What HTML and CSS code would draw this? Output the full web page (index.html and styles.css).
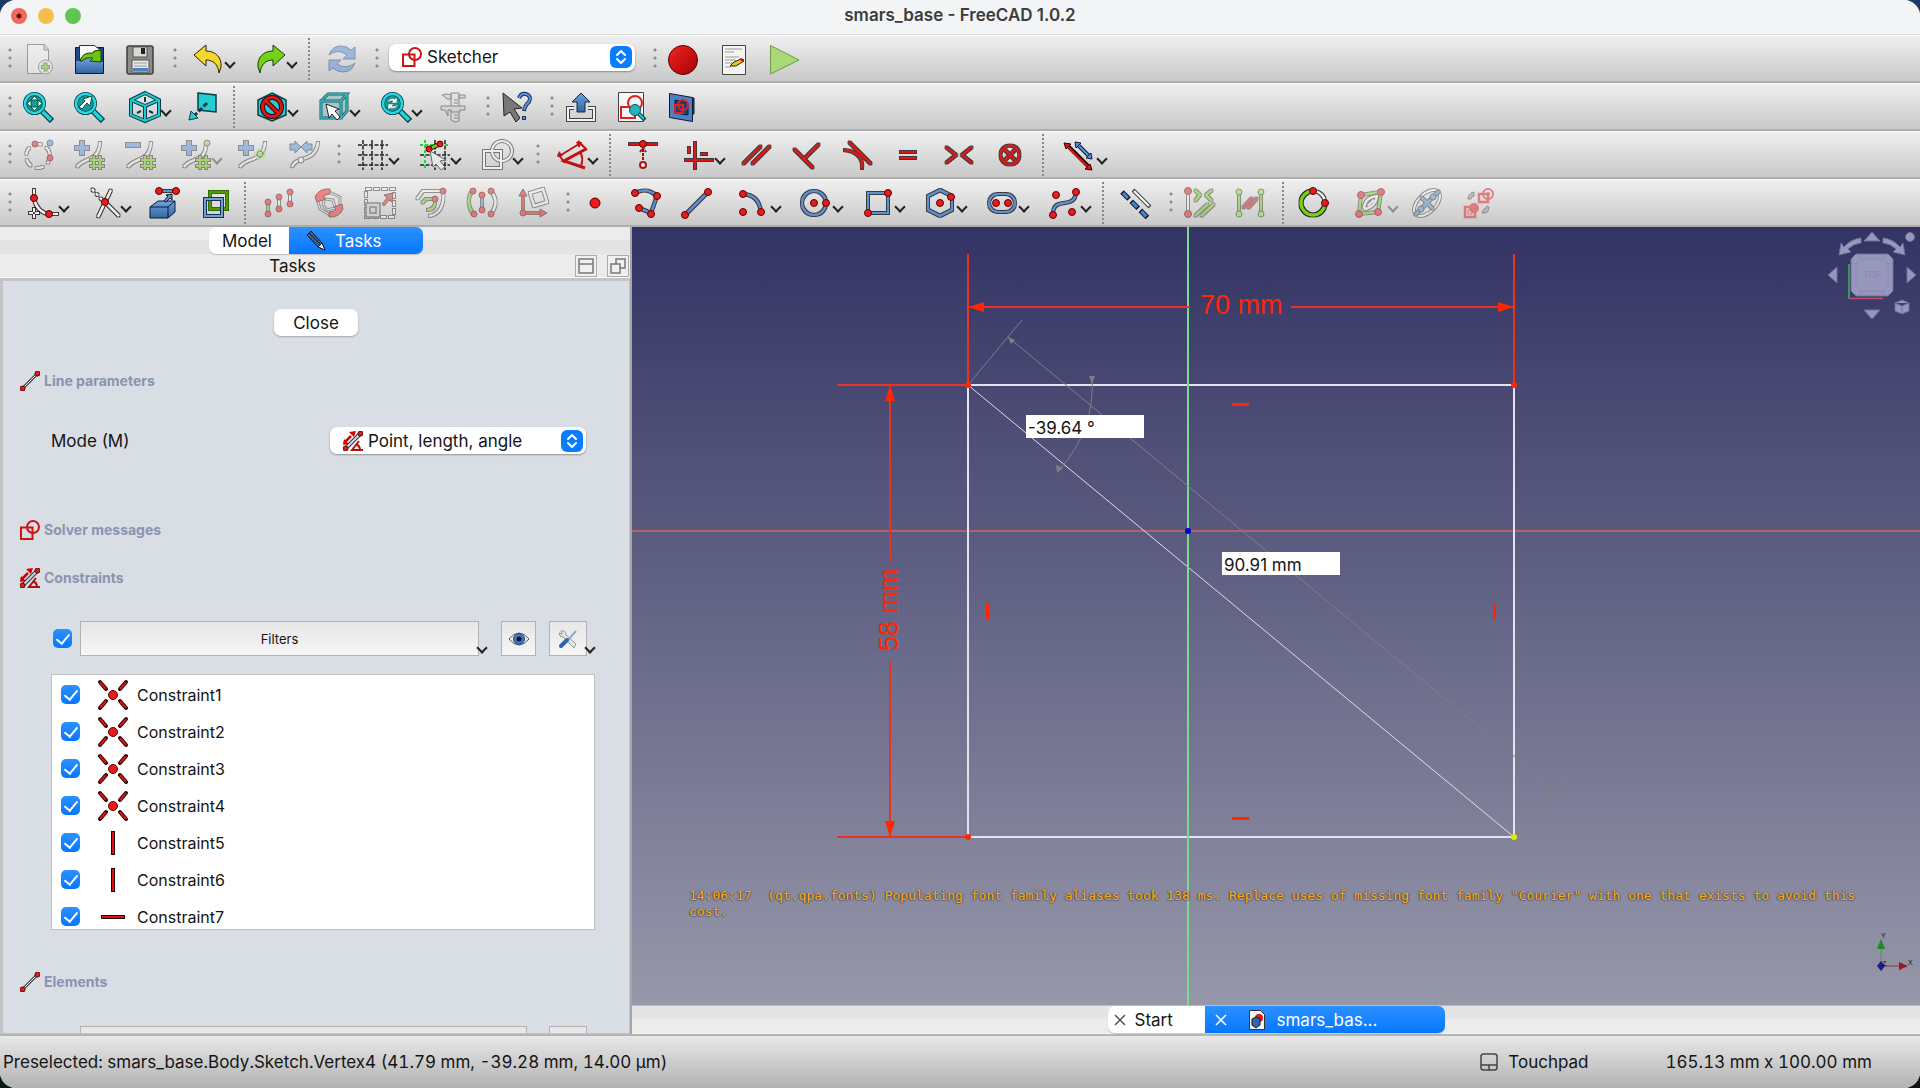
FILE: index.html
```html
<!DOCTYPE html>
<html lang="en">
<head>
<meta charset="utf-8">
<title>smars_base - FreeCAD 1.0.2</title>
<link rel="stylesheet" href="styles.css">
</head>
<body>
<svg class="defs" aria-hidden="true">
  <defs>
    <filter id="ol" x="-4" y="-4" width="40" height="40" filterUnits="userSpaceOnUse">
      <feMorphology in="SourceAlpha" operator="dilate" radius="0.8" result="fat"/>
      <feFlood flood-color="#1c1414" flood-opacity="0.8"/>
      <feComposite in2="fat" operator="in" result="edge"/>
      <feMerge><feMergeNode in="edge"/><feMergeNode in="SourceGraphic"/></feMerge>
    </filter>
    <linearGradient id="redg" x1="0" y1="0" x2="1" y2="1"><stop offset="0" stop-color="#f02525"/><stop offset="1" stop-color="#a80000"/></linearGradient>
    <linearGradient id="blueg" x1="0" y1="0" x2="0" y2="1"><stop offset="0" stop-color="#6fa2dc"/><stop offset="1" stop-color="#3465a4"/></linearGradient>
    <symbol id="sketch" viewBox="0 0 20 20"><path d="M1 7.500h11.500v11.500h-11.500z" class="s2"/><circle cx="13" cy="7" r="6" class="s2"/></symbol>
    <symbol id="line" viewBox="0 0 20 20"><path d="M3 17L17 3" stroke="#444" stroke-width="3"/><path d="M3 17L17 3" stroke="#eee" stroke-width="1"/><circle cx="2.500" cy="17.500" r="2.500" class="dot"/><circle cx="17.500" cy="2.500" r="2.500" class="dot"/></symbol>
    <symbol id="constr" viewBox="0 0 20 20"><path d="M3 17L17 3" stroke="#333" stroke-width="4"/><path d="M3 17L17 3" stroke="#cfd8e6" stroke-width="2"/><path d="M1 12L8 5" stroke="#d40000" stroke-width="2.500"/><path d="M0 14l1-6 5 5zM13 0l-7 1 5 5z" fill="#d40000"/><path d="M16 10L9 19h11M13 13q4 2 4 6" stroke="#b01010" stroke-width="2" fill="none"/><circle cx="2.500" cy="17.500" r="2.500" class="dot"/><circle cx="17.500" cy="2.500" r="2.500" class="dot"/></symbol>
    <symbol id="step" viewBox="0 0 22 22"><rect width="22" height="22" rx="6" fill="#0a7cff"/><path d="M7 9l4-4 4 4M7 13l4 4 4-4" fill="none" stroke="#fff" stroke-width="2" stroke-linecap="round" stroke-linejoin="round"/></symbol>
    <symbol id="coin" viewBox="0 0 32 32"><path d="M3 3L9 10M29 3L23 10M3 29L9 22M29 29L23 22" stroke="#250000" stroke-width="4" stroke-linecap="round"/><path d="M3 3L9 10M29 3L23 10M3 29L9 22M29 29L23 22" stroke="#e01010" stroke-width="2"/><circle cx="16" cy="16" r="4.500" class="dot"/></symbol>
    <symbol id="vert" viewBox="0 0 32 32"><rect x="14.500" y="4.500" width="3" height="23" fill="#e01010" stroke="#250000"/></symbol>
    <symbol id="horz" viewBox="0 0 32 32"><rect x="4.500" y="14.500" width="23" height="3" fill="#e01010" stroke="#250000"/></symbol>
    <symbol id="mag" viewBox="0 0 32 32"><path d="M18 18L30 30" stroke="#073f44" stroke-width="6"/><path d="M19 19L29 29" stroke="#22d5dc" stroke-width="3.500"/><circle cx="12.500" cy="12.500" r="9.500" fill="#159aa2" stroke="#073f44" stroke-width="4"/><circle cx="12.500" cy="12.500" r="9.500" fill="none" stroke="#22dbe2" stroke-width="2.500"/></symbol>
  </defs>
</svg>
<div class="window">
  <header class="titlebar">
    <div class="lights"><button class="light red" aria-label="Close window"></button><button class="light amber" aria-label="Minimize"></button><button class="light green" aria-label="Zoom"></button></div>
    <h1>smars_base - FreeCAD 1.0.2</h1>
  </header>

  <div class="toolbar" role="toolbar" aria-label="File">
    <span class="grip first"></span>
    <button class="tb off" aria-label="New"><svg viewBox="0 0 32 32"><path d="M5.500 1.500h17l4 5v24h-21z" fill="#f4f4f4" stroke="#555"/><path d="M22 2v5h4" fill="#ccc" stroke="#555"/><circle cx="23.500" cy="24" r="7" fill="#eee" stroke="#666"/><path d="M23.500 19.500v9M19 24h9" stroke="#3c7a10" stroke-width="4"/><path d="M23.500 20.500v7M20 24h7" stroke="#7ad53a" stroke-width="2"/></svg></button>
    <button class="tb" aria-label="Open"><svg viewBox="0 0 32 32"><path d="M2.500 4.500h28v26h-28z" fill="#204a87" stroke="#0b1a33"/><path d="M6.500 2.500h15l5 4v13h-20z" fill="#fafafa" stroke="#333"/><path d="M3 18h5l3-3h7l3 4h9v11H3z" fill="url(#blueg)"/><path d="M7 18Q9 9 20 10l1-2 7-1v12l-11-1 3-3q-7-1-11 3z" fill="#6cc40c" stroke="#173d00"/></svg></button>
    <button class="tb" aria-label="Save"><svg viewBox="0 0 32 32"><rect x="3" y="3" width="26" height="28" rx="2" fill="#8b8d88" stroke="#3d3f3c" stroke-width="1.500"/><rect x="9" y="4" width="14" height="10" fill="#d8d8d6" stroke="#555"/><rect x="17" y="5" width="4" height="6" fill="#222"/><rect x="8" y="17" width="17" height="12" fill="#e8e8e8" stroke="#555"/><path d="M10 20h13M10 23h13" stroke="#999"/><path d="M9 26.500h15" stroke="#4a7fcc" stroke-width="3"/></svg></button>
    <span class="grip"></span>
    <button class="tb menu" aria-label="Undo"><svg viewBox="0 0 32 32"><path d="M1 12L13 2V8C23 8 29 15 28 24L26 30C25 21 20 17 13 17V23Z" fill="#f2d72c" stroke="#2b2300"/></svg></button>
    <button class="tb menu" aria-label="Redo"><svg viewBox="0 0 32 32"><path d="M30 12L18 2V8C8 8 2 15 3 24L5 30C6 21 11 17 18 17V23Z" fill="#73d216" stroke="#173d00"/></svg></button>
    <span class="sep"></span>
    <button class="tb off" aria-label="Refresh"><svg viewBox="0 0 32 32"><path d="M3 12Q6 3 15 3q6 0 10 4l4-3v12H17l4-4q-9-7-18 0zM29 20Q26 29 17 29q-6 0-10-4l-4 3V17h12l-4 4q9 6 18-1z" fill="#5a8fd6" stroke="#2b4a78"/></svg></button>
    <span class="grip"></span>
    <div class="combo workbench"><svg><use href="#sketch"/></svg><select aria-label="Workbench"><option>Sketcher</option></select><svg class="step"><use href="#step"/></svg></div>
    <span class="grip"></span>
    <button class="tb" aria-label="Record macro"><svg viewBox="0 0 32 32"><circle cx="15" cy="17" r="14.500" fill="url(#redg)" stroke="#5c0000"/></svg></button>
    <button class="tb" aria-label="Macros"><svg viewBox="0 0 32 32"><path d="M3.500 2.500h23v29h-23z" fill="#f4f4f2" stroke="#444"/><path d="M6 6h17M6 9h9M6 14h14M6 17h11M6 20h8M6 24h6" stroke="#999"/><path d="M11 23l4-4 7-3 3 2-8 5z" fill="#e9c61a" stroke="#222"/><path d="M21 15l4 1v3l-3-1z" fill="#c11"/></svg></button>
    <button class="tb" aria-label="Run macro"><svg viewBox="0 0 32 32"><path d="M.500 2.500L29 17 .500 31z" fill="#a9d878" stroke="#6c9a45"/></svg></button>
  </div>

  <div class="toolbar" role="toolbar" aria-label="View">
    <span class="grip first"></span>
    <button class="tb" aria-label="Fit all"><svg viewBox="0 0 32 32"><use href="#mag"/><path d="M12.500 5l3.500 4h-7zM12.500 20l3.500-4h-7zM5 12.500l4-3.500v7zM20 12.500l-4-3.500v7z" fill="#fff" stroke="#053"/></svg></button>
    <button class="tb" aria-label="Fit selection"><svg viewBox="0 0 32 32"><use href="#mag"/><path d="M6 16l6-6-2-2 9-3-2 10-3-3-5 6z" fill="#fff" stroke="#053"/></svg></button>
    <button class="tb menu" aria-label="Isometric"><svg viewBox="0 0 32 32"><path d="M16 2L30 9V24L16 30 2 24V9ZM2 9l14 6 14-6M16 15v15" fill="none" stroke="#073f44" stroke-width="4"/><path d="M16 2L30 9V24L16 30 2 24V9ZM2 9l14 6 14-6M16 15v15" fill="none" stroke="#1fc9d0" stroke-width="2"/><path d="M16 6v5M8 22l4-2M24 22l-4-2" stroke="#073f44" stroke-width="2"/></svg></button>
    <button class="tb" aria-label="Align to selection"><svg viewBox="0 0 32 32"><path d="M12 2l18 2v17l-18-2z" fill="#22cdd4" stroke="#073f44" stroke-width="1.500"/><path d="M21 12L8 25" stroke="#073f44" stroke-width="3" stroke-dasharray="5 2"/><path d="M3 29l2-9 7 7z" fill="#22cdd4" stroke="#073f44"/></svg></button>
    <span class="sep"></span>
    <button class="tb menu" aria-label="Draw style"><svg viewBox="0 0 32 32"><path d="M16 2L30 9V24L16 30 2 24V9Z" fill="#22cdd4" stroke="#073f44" stroke-width="1.500"/><circle cx="16" cy="16" r="9.500" fill="none" stroke="#300" stroke-width="5"/><path d="M9 9L23 23" stroke="#300" stroke-width="5"/><circle cx="16" cy="16" r="9.500" fill="none" stroke="#d81818" stroke-width="3"/><path d="M10 10L22 22" stroke="#d81818" stroke-width="3"/></svg></button>
    <button class="tb menu" aria-label="Bounding box"><svg viewBox="0 0 32 32"><path d="M3 10l7-7h19v16l-6 8H3z" fill="#a8c6c8"/><path d="M3 10h20v17H3zM3 10l7-7h19l-6 7M29 3v17l-6 7" fill="none" stroke="#1d5a60" stroke-width="3"/><path d="M3 10h20v17H3zM3 10l7-7h19l-6 7M29 3v17l-6 7" fill="none" stroke="#35bcc2" stroke-width="1.500"/><path d="M8 13l13 5-4 2 5 6-3 3-5-6-3 4z" fill="#fff" stroke="#222"/></svg></button>
    <button class="tb menu" aria-label="Sync view"><svg viewBox="0 0 32 32"><use href="#mag"/><path d="M7 12q2-6 8-4l2-2v6h-6l2-2q-3-1-6 2zM18 13q-2 6-8 4l-2 2v-6h6l-2 2q3 1 6-2z" fill="#fff" stroke="#064" stroke-width=".500"/></svg></button>
    <button class="tb off" aria-label="Measure"><svg viewBox="0 0 32 32"><path d="M14 2h8v28l-4 1-4-2z" fill="#ddd" stroke="#333"/><path d="M5 4q6-2 9 0v4H10l-2-2zM22 4h6v3h-6zM4 15h24v4h-5v2h-9v-2h-3v6l-3-6H4z" fill="#ccc" stroke="#333"/><path d="M17 9h4M17 12h4M17 24h4M17 27h4" stroke="#333"/></svg></button>
    <span class="grip"></span>
    <button class="tb" aria-label="What's this?"><svg viewBox="0 0 32 32"><path d="M2 2L21 17l-8 1 6 9-4 4-6-10-6 4z" fill="#777a74" stroke="#222"/><path d="M18 7q2-5 7-4 6 2 3 8-4 3-5 9M23 25v4" fill="none" stroke="#16335e" stroke-width="4"/><path d="M18 7q2-5 7-4 6 2 3 8-4 3-5 8M23 26v2" fill="none" stroke="#5a93d8" stroke-width="2"/></svg></button>
    <span class="grip"></span>
    <button class="tb" aria-label="Leave sketch"><svg viewBox="0 0 32 32"><path d="M9 17H3v12h26V17h-6" fill="none" stroke="#444" stroke-width="4"/><path d="M9 17H3v12h26V17h-6" fill="none" stroke="#f4f4f4" stroke-width="2"/><path d="M16 2l9 9h-5v10h-8V11H7z" fill="url(#blueg)" stroke="#102a50"/></svg></button>
    <button class="tb" aria-label="View sketch"><svg viewBox="0 0 32 32"><path d="M2.500 1.500h25v29h-25z" fill="#f6f6f6" stroke="#444"/><path d="M5 16h14v11H5z" fill="none" stroke="#e02020" stroke-width="2"/><circle cx="19" cy="12" r="7" fill="none" stroke="#e02020" stroke-width="2"/><path d="M22 22l7 7" stroke="#073f44" stroke-width="4"/><path d="M23 23l5 5" stroke="#22cdd4" stroke-width="2"/><circle cx="19" cy="19" r="5.500" fill="#22b5bb" stroke="#0a585c"/></svg></button>
    <button class="tb" aria-label="View section"><svg viewBox="0 0 32 32"><path d="M12 7h15v16H12z" fill="#204a87" stroke="#0b1a33"/><path d="M2.500 2.500l23 4v24l-23-4z" fill="#4d80c4" stroke="#0b1a33"/><path d="M8 9l13 3v12L8 22z" fill="#1d3f75" stroke="#0b1a33"/><path d="M8 14h8v8H8z" fill="none" stroke="#e02020" stroke-width="2"/><circle cx="16" cy="14" r="5" fill="none" stroke="#e02020" stroke-width="2"/></svg></button>
  </div>

  <div class="toolbar" role="toolbar" aria-label="Sketcher tools">
    <span class="grip first"></span>
    <button class="tb off" aria-label="Modify geometry"><svg viewBox="0 0 32 32"><circle cx="16" cy="17" r="12" class="k w" stroke-dasharray="8 5"/><circle cx="13" cy="5" r="3" class="dot"/><circle cx="28" cy="19" r="3" class="dot"/><circle cx="28" cy="4" r="3" fill="#5a93d8" stroke="#234"/></svg></button>
    <button class="tb off" aria-label="Increase degree"><svg viewBox="0 0 32 32"><path d="M4 28C10 18 26 24 27 3" class="k w"/><path d="M9 2v14M2 9h14" class="k b4"/><path d="M21 17v13M27 17v13M17 21h14M17 27h14" class="k g"/></svg></button>
    <button class="tb off" aria-label="Decrease degree"><svg viewBox="0 0 32 32"><path d="M4 28C10 18 26 24 27 3" class="k w"/><path d="M2 6h14" class="k b4"/><path d="M21 17v13M27 17v13M17 21h14M17 27h14" class="k g"/></svg></button>
    <button class="tb menu off" aria-label="Knot multiplicity"><svg viewBox="0 0 32 32"><path d="M4 28C10 18 26 24 26 5" class="k w"/><path d="M9 2v14M2 9h14" class="k b4"/><path d="M20 17v13M26 17v13M16 21h14M16 27h14" class="k g"/><circle cx="27" cy="4" r="3" fill="#8ae234" stroke="#243"/></svg></button>
    <button class="tb off" aria-label="Insert knot"><svg viewBox="0 0 32 32"><path d="M3 28C8 18 27 24 28 3" class="k w"/><path d="M9 2v14M2 9h14" class="k b4"/><circle cx="23" cy="15" r="5" fill="none" stroke="#8ae234"/><circle cx="23" cy="15" r="3" fill="#8ae234" stroke="#243"/></svg></button>
    <button class="tb off" aria-label="Join curves"><svg viewBox="0 0 32 32"><path d="M4 28C8 16 28 24 30 3" class="k w"/><path d="M2 5h5V2l6 6-6 6v-3H2zM24 5h-5V2l-6 6 6 6v-3h5z" fill="#5a93d8" stroke="#234"/><circle cx="13" cy="21" r="3" fill="#eee" stroke="#333"/></svg></button>
    <span class="grip"></span>
    <button class="tb menu" aria-label="Toggle grid"><svg viewBox="0 0 32 32"><path d="M6 1v30M15 1v30M25 1v30M1 6h30M1 16h30M1 26h30" stroke="#222" stroke-width="1.500" stroke-dasharray="4 1.500"/></svg></button>
    <button class="tb menu" aria-label="Toggle snap"><svg viewBox="0 0 32 32"><path d="M16 1v30M26 1v30M1 16h30M1 26h30" stroke="#222" stroke-width="1.500" stroke-dasharray="4 1.500"/><path d="M6 1v30M1 6h30" stroke="#1bdc2b" stroke-width="2" stroke-dasharray="3 2"/><path d="M10 10L21 5" class="k g"/><circle cx="10" cy="10" r="3" class="dot"/><circle cx="21" cy="5" r="3" class="dot"/><path d="M11 12l16 9-6 1 5 6-4 3-5-6-3 3z" fill="#e8e8e8" stroke="#666"/></svg></button>
    <button class="tb menu" aria-label="Rendering order"><svg viewBox="0 0 32 32"><path d="M3 12h17v17H3z" fill="none" stroke="#777" stroke-width="4"/><circle cx="21" cy="12" r="10" fill="none" stroke="#777" stroke-width="4"/><path d="M3 12h17v17H3z" fill="none" stroke="#eee" stroke-width="2"/><circle cx="21" cy="12" r="10" fill="none" stroke="#eee" stroke-width="2"/></svg></button>
    <span class="grip"></span>
    <button class="tb menu" aria-label="Dimension"><svg viewBox="0 0 32 32"><g fill="none" stroke="#c01010"><path d="M30 10L8 22l21 7" stroke-width="3"/><path d="M5 16L23 5M22 2l9 9M2 15l7 9" stroke-width="2"/><path d="M24 13q4 6 1 14" stroke-width="2"/></g><path d="M1 18l2-6 4 5zM26 3l-6 0 3 6z" fill="#c01010"/></svg></button>
    <span class="sep"></span>
    <button class="tb" aria-label="Constrain coincident"><svg viewBox="0 0 32 32"><path d="M2 5h28" class="k r"/><circle cx="16" cy="5" r="3.500" class="dot"/><path d="M16 10v12M13 13l3-4 3 4" stroke="#a01010" stroke-width="2" stroke-dasharray="3 1" fill="none"/><circle cx="16" cy="26" r="3" fill="#fff" stroke="#b01010" stroke-width="2"/></svg></button>
    <button class="tb menu" aria-label="Constrain horizontal or vertical"><svg viewBox="0 0 32 32"><path d="M12 3v27M2 21h28M6 8v6M18 15h6" class="k r"/></svg></button>
    <button class="tb" aria-label="Constrain parallel"><svg viewBox="0 0 32 32"><path d="M3 25L21 7M12 25L30 7" class="k r"/></svg></button>
    <button class="tb" aria-label="Constrain perpendicular"><svg viewBox="0 0 32 32"><path d="M3 10L22 29M13 20L28 5" class="k r"/></svg></button>
    <button class="tb" aria-label="Constrain tangent"><svg viewBox="0 0 32 32"><path d="M7 3L29 25M2 11Q22 13 20 30" class="k r"/></svg></button>
    <button class="tb" aria-label="Constrain equal"><svg viewBox="0 0 32 32"><path d="M7 13h16M7 19h16" class="k r"/></svg></button>
    <button class="tb" aria-label="Constrain symmetric"><svg viewBox="0 0 32 32"><path d="M2 8l10 8-10 8M28 8l-10 8 10 8" class="k r"/></svg></button>
    <button class="tb" aria-label="Constrain block"><svg viewBox="0 0 32 32"><g class="k r"><circle cx="15" cy="16" r="9.500"/><path d="M9 10L21 22M21 10L9 22"/></g></svg></button>
    <span class="sep"></span>
    <button class="tb menu" aria-label="Toggle driving constraint"><svg viewBox="0 0 32 32"><g stroke="#250000"><path d="M3 7L25 29" stroke-width="4"/><path d="M2 7L24 29" stroke="#d81818" stroke-width="2"/><path d="M-1 4l7 1-5 5zM27 31l-7-1 5-5z" fill="#d81818"/></g><g stroke="#0b1a33"><path d="M12 5L25 18" stroke-width="4"/><path d="M12 5L25 18" stroke="#5a93d8" stroke-width="2"/><path d="M10 3l6 1-5 5zM27 20l-6-1 5-5z" fill="#5a93d8"/></g></svg></button>
  </div>

  <div class="toolbar" role="toolbar" aria-label="Sketcher geometry">
    <span class="grip first"></span>
    <button class="tb menu" aria-label="Fillet"><svg viewBox="0 0 32 32"><path d="M7 2v10C9 20 14 26 22 27h9" class="k w"/><path d="M7 21v10M2 26h10" class="k w" stroke-dasharray="4 2"/><circle cx="7" cy="11" r="3.500" class="dot"/><circle cx="22" cy="27" r="3.500" class="dot"/></svg></button>
    <button class="tb menu" aria-label="Trim"><svg viewBox="0 0 32 32"><path d="M22 3L9 30M16 15L30 29" class="k w"/><path d="M3 2l11 12" class="k w" stroke-dasharray="3 3"/><circle cx="16" cy="15" r="3.500" class="dot"/></svg></button>
    <button class="tb" aria-label="External geometry"><svg viewBox="0 0 32 32"><path d="M4 20l8-6h17v11l-7 6H4z" fill="url(#blueg)" stroke="#0b1a33"/><path d="M4 20h18l7-6M22 20v11" fill="none" stroke="#0b1a33"/><path d="M13 4h16" class="k b"/><path d="M18 14l4-5-2-1 6-1v6l-2-2-4 4z" fill="#5a93d8" stroke="#0b1a33"/><circle cx="13" cy="4" r="3.500" class="dot"/><circle cx="30" cy="4" r="3.500" class="dot"/></svg></button>
    <button class="tb" aria-label="Carbon copy"><svg viewBox="0 0 32 32"><path d="M13 5h17v17H13z" fill="none" stroke="#1d4000" stroke-width="4"/><path d="M13 5h17v17H13z" fill="none" stroke="#4e9a06" stroke-width="3"/><path d="M8 12h17v17H8z" fill="none" stroke="#14305c" stroke-width="4"/><path d="M8 12h17v17H8z" fill="none" stroke="#729fcf" stroke-width="2"/></svg></button>
    <span class="sep"></span>
    <button class="tb off" aria-label="Translate"><svg viewBox="0 0 32 32"><path d="M6 15v12" class="k g"/><path d="M17 10v12M28 5v12" class="k w"/><g class="dot"><circle cx="6" cy="15" r="3"/><circle cx="6" cy="27" r="3"/><circle cx="17" cy="10" r="3"/><circle cx="17" cy="22" r="3"/><circle cx="28" cy="5" r="3"/><circle cx="28" cy="17" r="3"/></g></svg></button>
    <button class="tb off" aria-label="Rotate"><svg viewBox="0 0 32 32"><path d="M4 12l12-7 11 5v12l-10 6-10-6zM11 12l9 1 2 8-8 2-4-5z" fill="none" stroke="#555" stroke-width="3"/><path d="M4 12l12-7 11 5v12l-10 6-10-6zM11 12l9 1 2 8-8 2-4-5z" fill="none" stroke="#eee"/><path d="M2 10Q6 1 17 2v5q-5 0-7 3l3 2-9 3zM30 22Q26 31 16 30v-5q5 0 7-3l-2-2 8-3z" fill="#ef2929" stroke="#500"/></svg></button>
    <button class="tb off" aria-label="Scale"><svg viewBox="0 0 32 32"><path d="M2 2h28v28H2z" class="k w" stroke-dasharray="5 3"/><path d="M2 16h14v14H2zM6 20h6v6H6z" fill="#ccc" stroke="#444" stroke-width="1.500"/><path d="M18 17l5-6-3-3 9-2-1 9-3-2-5 6z" fill="#e03030" stroke="#500"/></svg></button>
    <button class="tb off" aria-label="Offset"><svg viewBox="0 0 32 32"><path d="M2 12l6-8h20c2 14-4 24-14 25" class="k w"/><path d="M7 16l4-4h9c1 7-2 11-8 11" class="k g"/><circle cx="28" cy="4" r="3" class="dot"/><circle cx="20" cy="12" r="3" class="dot"/></svg></button>
    <button class="tb off" aria-label="Symmetry"><svg viewBox="0 0 32 32"><path d="M6 4Q-1 15 7 27" class="k g"/><path d="M25 4q9 11 0 23" class="k w"/><path d="M16 9v14" class="k b"/><g class="dot"><circle cx="7" cy="4" r="3"/><circle cx="8" cy="27" r="3"/><circle cx="16" cy="8" r="3"/><circle cx="16" cy="23" r="3"/><circle cx="25" cy="4" r="3"/><circle cx="25" cy="27" r="3"/></g></svg></button>
    <button class="tb off" aria-label="Remove axes alignment"><svg viewBox="0 0 32 32"><path d="M13 6l13-4 4 13-13 4z" class="k w"/><path d="M6 26V7M6 26h20" class="k r"/><path d="M2 9l4-7 4 7zM23 22l7 4-7 4z" fill="#e02020" stroke="#500"/><circle cx="6" cy="26" r="3" class="dot"/></svg></button>
    <span class="grip"></span>
    <button class="tb" aria-label="Point"><svg viewBox="0 0 32 32"><circle cx="14" cy="16" r="5" class="dot"/></svg></button>
    <button class="tb" aria-label="Polyline"><svg viewBox="0 0 32 32"><path d="M3 6q12-6 22 3l-6 17-12-5" class="k b"/><g class="dot"><circle cx="3" cy="6" r="3.500"/><circle cx="25" cy="9" r="3.500"/><circle cx="19" cy="27" r="3.500"/><circle cx="7" cy="21" r="3.500"/></g></svg></button>
    <button class="tb" aria-label="Line"><svg viewBox="0 0 32 32"><path d="M2 28L25 5" class="k b"/><circle cx="2" cy="28" r="3.500" class="dot"/><circle cx="25" cy="5" r="3.500" class="dot"/></svg></button>
    <button class="tb menu" aria-label="Arc"><svg viewBox="0 0 32 32"><path d="M4 7Q20 8 22 25" class="k b"/><circle cx="4" cy="7" r="3.500" class="dot"/><circle cx="22" cy="25" r="3.500" class="dot"/><circle cx="4" cy="25" r="3.500" class="dot"/></svg></button>
    <button class="tb menu" aria-label="Circle"><svg viewBox="0 0 32 32"><circle cx="13" cy="16" r="12" class="k b"/><circle cx="13" cy="16" r="3.500" class="dot"/><circle cx="25" cy="16" r="3.500" class="dot"/></svg></button>
    <button class="tb menu" aria-label="Rectangle"><svg viewBox="0 0 32 32"><path d="M5 6h20v20H5z" class="k b"/><circle cx="25" cy="6" r="3.500" class="dot"/><circle cx="5" cy="26" r="3.500" class="dot"/></svg></button>
    <button class="tb menu" aria-label="Polygon"><svg viewBox="0 0 32 32"><path d="M15 3L27 9V23L15 29 3 23V9Z" class="k b"/><circle cx="15" cy="16" r="3.500" class="dot"/><circle cx="26" cy="10" r="3.500" class="dot"/></svg></button>
    <button class="tb menu" aria-label="Slot"><svg viewBox="0 0 32 32"><rect x="2" y="7" width="26" height="18" rx="9" class="k b"/><circle cx="9" cy="16" r="3.500" class="dot"/><circle cx="21" cy="16" r="3.500" class="dot"/></svg></button>
    <button class="tb menu" aria-label="B-spline"><svg viewBox="0 0 32 32"><path d="M4 27C4 8 26 24 27 5" class="k b"/><circle cx="4" cy="28" r="3.500" class="dot"/><circle cx="27" cy="5" r="3.500" class="dot"/><circle cx="7" cy="8" r="3.500" class="dot"/><circle cx="23" cy="25" r="3.500" class="dot"/></svg></button>
    <span class="sep"></span>
    <button class="tb" aria-label="Construction geometry"><svg viewBox="0 0 32 32"><path d="M2 5L28 31" stroke="#0b1a33" stroke-width="5" stroke-dasharray="10 3"/><path d="M3 6L27 30" stroke="#4a86cf" stroke-width="3" stroke-dasharray="7 6"/><path d="M13 3L30 20" stroke="#444" stroke-width="4"/><path d="M14 4L29 19" stroke="#fff" stroke-width="2"/></svg></button>
    <span class="grip"></span>
    <button class="tb off" aria-label="Select constraints"><svg viewBox="0 0 32 32"><path d="M4 5v22" class="k w"/><path d="M11 3l5 5-5 6M28 3l-6 5 6 6M11 29l13-12M17 29l13-12" class="k g"/><circle cx="4" cy="4" r="3.500" class="dot"/><circle cx="4" cy="27" r="3.500" class="dot"/></svg></button>
    <button class="tb off" aria-label="Select elements"><svg viewBox="0 0 32 32"><path d="M4 5v22M26 5v22" class="k g"/><path d="M8 21l9-10M13 21l9-10" class="k r"/><g fill="#8ae234" stroke="#243"><circle cx="4" cy="5" r="3"/><circle cx="4" cy="27" r="3"/><circle cx="26" cy="5" r="3"/><circle cx="26" cy="27" r="3"/></g></svg></button>
    <span class="sep"></span>
    <button class="tb" aria-label="Show conflicts"><svg viewBox="0 0 32 32"><circle cx="13" cy="16" r="12" class="k w"/><path d="M13 4A12 12 0 1 0 25 16" class="k g3"/><circle cx="13" cy="4" r="3.500" class="dot"/><circle cx="25" cy="16" r="3.500" class="dot"/></svg></button>
    <button class="tb menu off" aria-label="Internal geometry"><svg viewBox="0 0 32 32"><path d="M5 8l20-3-3 20-19 2z" class="k g"/><path d="M8 20c2-8 6-10 13-11-1 6-3 11-12 13zM12 19l6-6" class="k w"/><g class="dot"><circle cx="5" cy="8" r="3.500"/><circle cx="25" cy="5" r="3.500"/><circle cx="22" cy="25" r="3.500"/><circle cx="3" cy="27" r="3.500"/></g></svg></button>
    <button class="tb off" aria-label="Ellipse axes"><svg viewBox="0 0 32 32"><ellipse cx="14" cy="16" rx="16" ry="9" transform="rotate(-45 14 16)" fill="none" stroke="#444" stroke-width="4"/><ellipse cx="14" cy="16" rx="16" ry="9" transform="rotate(-45 14 16)" class="w"/><path d="M2 28L26 4M8 10l12 12" class="k b"/><circle cx="8" cy="22" r="3" fill="#5a93d8" stroke="#234"/><circle cx="20" cy="10" r="3" fill="#5a93d8" stroke="#234"/></svg></button>
    <button class="tb off" aria-label="Switch virtual space"><svg viewBox="0 0 32 32"><path d="M15 7h9v8h-9zM1 20h10v10H1z" fill="none" stroke="#e02020" stroke-width="2.500"/><path d="M4 23h4v4H4z" fill="none" stroke="#e02020"/><circle cx="24" cy="7" r="5" fill="none" stroke="#e02020" stroke-width="2"/><circle cx="24" cy="7" r="2" fill="#e02020"/><circle cx="10" cy="21" r="5" fill="#e02020"/><path d="M4 12q0-6 6-7v4q-3 0-3 3zM25 20q0 7-7 6l2-4q2 0 3-3z" fill="#999" stroke="#444"/></svg></button>
  </div>

  <main class="body">
    <aside class="side">
      <nav class="tabs"><button class="tab">Model</button><button class="tab on"><svg viewBox="0 0 20 20"><path d="M1 4l4-4 11 12 3 7-7-3z" fill="#3b5f8f" stroke="#101820"/><path d="M3 2l12 12" stroke="#0e1c30"/><path d="M12 16l4-4 3 7z" fill="#fff" stroke="#111"/></svg>Tasks</button></nav>
      <div class="dock"><h2>Tasks</h2><span class="dockbtns"><button aria-label="Collapse"><svg viewBox="0 0 20 20"><path d="M3 3h14v14H3zM3 8h14" class="ln"/></svg></button><button aria-label="Float"><svg viewBox="0 0 20 20"><path d="M8 8V3h9v9h-5M3 8h9v9H3z" class="ln"/></svg></button></span></div>
      <div class="panel">
        <button class="close">Close</button>
        <h3><svg><use href="#line"/></svg>Line parameters</h3>
        <div class="mode"><label for="mode">Mode (M)</label><div class="combo"><svg><use href="#constr"/></svg><select id="mode"><option>Point, length, angle</option></select><svg class="step"><use href="#step"/></svg></div></div>
        <h3 class="solver"><svg><use href="#sketch"/></svg>Solver messages</h3>
        <h3 class="cons"><svg><use href="#constr"/></svg>Constraints</h3>
        <div class="filters">
          <input type="checkbox" checked aria-label="Enable filters">
          <button class="flat wide drop">Filters</button>
          <button class="flat eye" aria-label="Show or hide"><svg viewBox="0 0 20 20"><path d="M0 10Q10-2 20 10 10 22 0 10z" fill="#f4f4f4" stroke="#555"/><circle cx="10" cy="10" r="5.500" fill="#3f78c0" stroke="#204a87"/><circle cx="10" cy="10" r="2.500" fill="#0a1020"/></svg></button>
          <button class="flat tools drop" aria-label="Settings"><svg viewBox="0 0 20 20"><path d="M3 2q5-1 5 4l10 9-2 4L5 8Q1 8 1 4l3 1z" fill="#e4e4e4" stroke="#999"/><path d="M18 2L10 11" stroke="#8fa9cc" stroke-width="2"/><path d="M9 11L3 17" stroke="#2c62ae" stroke-width="4" stroke-linecap="round"/></svg></button>
        </div>
        <ul class="list">
          <li><label><input type="checkbox" checked><svg><use href="#coin"/></svg>Constraint1</label></li>
          <li><label><input type="checkbox" checked><svg><use href="#coin"/></svg>Constraint2</label></li>
          <li><label><input type="checkbox" checked><svg><use href="#coin"/></svg>Constraint3</label></li>
          <li><label><input type="checkbox" checked><svg><use href="#coin"/></svg>Constraint4</label></li>
          <li><label><input type="checkbox" checked><svg><use href="#vert"/></svg>Constraint5</label></li>
          <li><label><input type="checkbox" checked><svg><use href="#vert"/></svg>Constraint6</label></li>
          <li><label><input type="checkbox" checked><svg><use href="#horz"/></svg>Constraint7</label></li>
        </ul>
        <h3 class="elems"><svg><use href="#line"/></svg>Elements</h3>
        <div class="filters more"><button class="flat wide" aria-label="Element filter"></button><button class="flat tools" aria-label="Element settings"></button></div>
      </div>
    </aside>

    <section class="right">
      <div class="view">
        <svg class="scene" viewBox="0 0 1288 781" preserveAspectRatio="xMinYMin slice">
          <path d="M0 304h1288" stroke="#b5606c" stroke-width="2"/>
          <g stroke="#e3e3ee" fill="none"><path d="M336 158h546v452H336z" stroke-width="2"/><path d="M336 158L882 610" stroke="#dedee6" stroke-width="1"/></g>
          <path d="M556 0v781" stroke="#77dc8c" stroke-width="2"/>
          <g stroke="#7f7f84" fill="none"><path d="M336 158L390 93M376 110L922 562M882 610L935 546"/><path d="M460 149A124 124 0 0 1 428 242"/></g>
          <path d="M457 149h6l-3 8zM424 238l7 3-6 5zM376 110l7 3-4 4zM922 562l-3-6-4 4z" fill="#7f7f84"/>
          <g stroke="#e63323" stroke-width="2" fill="none"><path d="M336 27v131M882 27v131M336 80h222M659 80h223M205 158h131M205 610h131M258 158v176M258 434v176"/></g>
          <g fill="#ff2600"><path d="M336 80l16-5v10zM882 80l-16-5v10zM258 158l-5 16h10zM258 610l-5-16h10z"/><circle cx="336" cy="158" r="3"/><circle cx="882" cy="158" r="3"/><circle cx="336" cy="610" r="3"/><path d="M600 176h17v3h-17zM600 590h17v3h-17zM354 376h3v16h-3zM861 376h3v16h-3z"/></g>
          <circle cx="882" cy="610" r="3" fill="#e6e600"/><circle cx="556" cy="304" r="3" fill="#0000d8"/>
          <text x="568" y="87" class="dim">70 mm</text>
          <text x="-424" y="266" class="dim" transform="rotate(-90)">58 mm</text>
        </svg>
        <input class="ovp angle" aria-label="Angle" value="-39.64 °">
        <input class="ovp length" aria-label="Length" value="90.91 mm">
        <svg class="cube" viewBox="0 0 96 96">
          <g fill="#9797bd" stroke="#6e6e9a"><path d="M32 27h32l5 5v32l-5 5H32l-5-5V32z"/><path d="M37 32h22l5 5v22l-5 5H37l-5-5V37zM37 27v5M59 27v5M37 64v5M59 64v5M27 37h5M27 59h5M64 37h5M64 59h5" fill="none" stroke="#8b8baf"/><path d="M48 5l8 9H40zM48 92l8-9H40zM4 48l9-8v16zM92 48l-9-8v16zM15 28l2-12 3 4q7-8 17-9v5q-8 1-13 6l3 3zM81 28l-2-12-3 4q-7-8-17-9v5q8 1 13 6l-3 3z"/><circle cx="86" cy="10" r="4.500"/><path d="M78 73l7 3v8l-7 3-7-3v-8zM71 76l7 3 7-3M78 79v8"/></g>
          <path d="M25 37v35" stroke="#46e65a"/><path d="M25 71.500h34" stroke="#c0506a" stroke-width="1.500"/>
          <text x="48" y="51" text-anchor="middle" class="top">TOP</text>
        </svg>
        <p class="log">14:06:17&nbsp; (qt.qpa.fonts) Populating font family aliases took 138 ms. Replace uses of missing font family "Courier" with one that exists to avoid this cost.</p>
        <svg class="axes" viewBox="0 0 44 44"><path d="M9 34V16" stroke="#4a9a50"/><path d="M9 7l4 10H5z" fill="#1d8a22"/><path d="M9 34h18" stroke="#9a3040"/><path d="M36 34l-9-4v8z" fill="#8f1c22"/><path d="M9 29l4 5-4 5-4-5z" fill="#1a1a90"/><g class="lab"><text x="9" y="6">Y</text><text x="36" y="33">X</text><text x="10" y="34">Z</text></g></svg>
      </div>
      <nav class="doctabs"><button class="tab doc"><svg viewBox="0 0 12 12"><path d="M1 1l10 10M11 1L1 11" stroke="#555" stroke-width="1.500"/></svg>Start</button><button class="tab on doc cur"><svg viewBox="0 0 12 12"><path d="M1 1l10 10M11 1L1 11" stroke="#fff" stroke-width="1.500"/></svg><svg class="file" viewBox="0 0 16 20"><path d="M.5.500h11l4 4v15H.5z" fill="#f4f4f4" stroke="#333"/><circle cx="10" cy="8" r="4" fill="#d81818"/><path d="M3 9l4-2 4 2v6l-4 3-4-3z" fill="#3465a4" stroke="#0b1a33"/></svg>smars_bas...</button></nav>
    </section>
  </main>

  <footer class="status"><span class="msg">Preselected: smars_base.Body.Sketch.Vertex4 (41.79 mm, -39.28 mm, 14.00 µm)</span><button class="nav"><svg viewBox="0 0 18 18"><rect x="1" y="1" width="16" height="16" rx="2.500" fill="none" stroke="#444" stroke-width="1.500"/><path d="M1 12h16M9 12v5" stroke="#444" stroke-width="1.500"/></svg>Touchpad</button><span class="size">165.13 mm x 100.00 mm</span></footer>
</div>
</body>
</html>
```
FILE: styles.css
```css
* { box-sizing: border-box; }
html, body { height: 100%; }
body { margin: 0; background: linear-gradient(#1d3a66, #0b1616); font: 17px/20px Inter, "Liberation Sans", sans-serif; color: #141414; }
button, select, input { font: inherit; color: inherit; margin: 0; }
button { border: 0; padding: 0; background: none; }
h1, h2, h3, p, ul { margin: 0; padding: 0; }
.defs { position: absolute; width: 0; height: 0; }
.window { display: flex; flex-direction: column; height: 100vh; border-radius: 16px; overflow: hidden; background: #ececec; }

/* title bar */
.titlebar { display: grid; grid-template-columns: 1fr auto 1fr; align-items: center; height: 35px; flex: none; background: #f3f4f6; border-bottom: 1px solid #dcdcdc; }
.titlebar h1 { font-size: 17px; line-height: 20px; font-weight: 600; color: #3c3c3c; padding-bottom: 4px; }
.lights { display: flex; gap: 11px; padding: 0 0 2px 11px; }
.light { width: 16px; height: 16px; border-radius: 50%; }
.red { background: radial-gradient(circle, #6c0d08 2px, #ed6a5e 3px); }
.amber { background: #f5bf4f; }
.green { background: #61c554; }

/* tool bars */
.toolbar { display: flex; align-items: center; height: 48px; flex: none; background: linear-gradient(#efefef, #c9c9c9); border-top: 1px solid #f8f8f8; border-bottom: 2px solid #adadad; }
.tb { width: 51px; height: 44px; display: flex; align-items: center; justify-content: center; position: relative; flex: none; }
.tb svg { width: 32px; height: 32px; overflow: visible; }
.menu { width: 62px; }
.menu::after, .drop::after { content: ""; position: absolute; right: 6px; bottom: 14px; width: 6px; height: 6px; border: solid #222; border-width: 0 2px 2px 0; transform: rotate(45deg); }
.off svg { opacity: .5; }
.off::after { opacity: .4; }
.grip { width: 13px; height: 26px; flex: none; background: radial-gradient(circle, #8e8e8e 1px, transparent 2px) 8px 0 / 4px 8px repeat-y; }
.first { width: 12px; }
.sep { width: 14px; height: 42px; flex: none; background: linear-gradient(#888 50%, transparent 50%) 6px 0 / 2px 4px repeat-y; }
.k { filter: url(#ol); }
.r, .b, .b4, .g, .g3, .w { fill: none; stroke-width: 2; }
.r { stroke: #e01818; }
.b { stroke: #5a93d8; }
.b4 { stroke: #5a8fd6; stroke-width: 4; }
.g { stroke: #73d216; }
.g3 { stroke: #73d216; stroke-width: 3; }
.w { stroke: #f4f4f4; }
.dot { fill: #e81c1c; stroke: #5c0000; stroke-width: 1; }
.s2 { fill: none; stroke: #cc1414; stroke-width: 2; }

/* drop-downs */
.combo { display: flex; align-items: center; gap: 5px; height: 27px; padding: 0 3px 0 13px; background: #fff; border-radius: 7px; box-shadow: 0 1px 2px rgba(0,0,0,.35); }
.combo svg { width: 20px; height: 20px; flex: none; }
.combo .step { width: 22px; height: 22px; }
.combo select { flex: 1; min-width: 0; appearance: none; border: 0; padding: 0; background: none; }
.workbench { width: 246px; margin: 0 10px 3px 9px; }

/* main split */
.body { display: flex; flex: 1; min-height: 0; }
.side { width: 632px; flex: none; display: flex; flex-direction: column; border-right: 2px solid #a6a6a6; }
.tabs { display: flex; justify-content: center; height: 27px; padding-left: 2px; background: linear-gradient(#ececec 13px, #e4e4e4 13px); }
.tab { display: flex; align-items: center; height: 27px; padding: 0 17px 0 13px; background: #fff; border-radius: 7px 0 0 7px; box-shadow: 0 1px 1px rgba(0,0,0,.2); }
.tab.on { color: #fff; background: linear-gradient(#2c91ff, #0577ff); border-radius: 0 7px 7px 0; }
.tabs .on { width: 134px; padding: 0 17px; gap: 9px; }
.tabs .on svg { width: 20px; height: 20px; }
.dock { display: flex; align-items: center; height: 24px; border-bottom: 1px solid #fafafa; }
.dock h2 { flex: 1; text-align: center; font-size: 17px; font-weight: 400; padding-left: 10px; }
.dockbtns { display: flex; gap: 10px; padding-right: 1px; }
.dockbtns button { width: 22px; height: 22px; border: 1px solid #aaa; background: #f0f0f0; }
.dockbtns svg { display: block; width: 20px; height: 20px; }
.ln { fill: none; stroke: #777; stroke-width: 1.5; }
.panel { flex: 1; min-height: 0; overflow: hidden; display: flex; flex-direction: column; background: #d9dee5; border: solid #c4c4c4; border-width: 3px 1px 1px 3px; }
.panel > * { flex: none; }
.close { width: 84px; height: 27px; align-self: center; margin-top: 28px; background: #fff; border-radius: 7px; box-shadow: 0 1px 2px rgba(0,0,0,.25); }
h3 { display: flex; align-items: center; gap: 4px; height: 20px; padding-left: 17px; font-size: 14px; font-weight: 700; color: #8a93b1; }
h3 svg { width: 20px; height: 20px; }
.close + h3 { margin-top: 35px; }
.mode { display: flex; justify-content: space-between; align-items: center; margin-top: 36px; padding: 0 43px 0 48px; }
.mode .combo { width: 256px; }
.solver { margin-top: 66px; }
.cons { margin-top: 28px; }
.filters { display: flex; align-items: center; margin-top: 33px; padding: 0 42px 0 50px; height: 35px; }
input[type=checkbox] { appearance: none; width: 19px; height: 19px; flex: none; border-radius: 5px; background: linear-gradient(#2c91ff, #0577ff); display: grid; place-items: center; }
input[type=checkbox]:checked::after { content: ""; width: 6px; height: 11px; border: solid #fff; border-width: 0 2px 2px 0; transform: translateY(-1px) rotate(40deg); }
.flat { position: relative; height: 35px; border: 1px solid #b2b2b2; background: linear-gradient(#e6e6e6, #f6f6f6); font-size: 13px; display: grid; place-items: center; }
.flat svg { width: 20px; height: 20px; }
.filters .wide { flex: 1; margin: 0 22px 0 8px; }
.eye { width: 35px; margin-right: 13px; }
.tools { width: 38px; }
.drop::after { right: -8px; bottom: 3px; }
.list { list-style: none; height: 256px; margin: 18px 34px 0 48px; padding-top: 1px; overflow: hidden; background: #fff; border: 1px solid #c0c0c0; font-size: 16px; }
.list label { display: flex; align-items: center; height: 37px; padding-left: 9px; }
.list svg { width: 32px; height: 32px; margin: 0 8px 0 17px; }
.elems { margin-top: 42px; }
.more { margin-top: 34px; padding-left: 77px; }
.filters.more .wide { margin: 0 22px 0 0; }

/* 3D view */
.right { flex: 1; min-width: 0; display: flex; flex-direction: column; }
.view { flex: 1; min-height: 0; position: relative; overflow: hidden; background: linear-gradient(#333364, #9797aa); border-bottom: 1px solid #bbb; }
.scene { position: absolute; inset: 0; width: 100%; height: 100%; }
.dim { font: 27px "Liberation Sans", sans-serif; fill: #ff2600; }
.ovp { position: absolute; width: 118px; height: 23px; border: 0; padding: 2px 2px 0; background: #fff; font-size: 17px; border-radius: 0; }
.angle { left: 394px; top: 188px; }
.length { left: 590px; top: 325px; }
.cube { position: absolute; right: 0; top: 0; width: 96px; height: 96px; }
.top { font: 9px "DejaVu Sans", sans-serif; fill: #8888ad; }
.axes { position: absolute; right: 4px; bottom: 29px; width: 44px; height: 44px; }
.lab { font: 7px "Liberation Sans", sans-serif; fill: #111; }
.log { position: absolute; left: 57px; right: 34px; bottom: 85px; font: 13px/16px "DejaVu Sans Mono", monospace; color: #ffaa08; text-shadow: 1px 0 1px rgba(70,70,70,.7), -1px 0 1px rgba(70,70,70,.7), 0 1px 1px rgba(70,70,70,.5); }

/* document tabs */
.doctabs { display: flex; justify-content: center; height: 28px; flex: none; background: linear-gradient(#e4e4e4 13px, #ececec 13px); border-bottom: 1px solid #f8f8f8; }
.doc { width: 97px; padding: 0 6px; gap: 9px; }
.doc svg { width: 12px; height: 12px; }
.cur { width: 240px; padding-left: 10px; }
.doc .file { width: 16px; height: 20px; margin: 0 3px 0 13px; }

/* status bar */
.status { display: flex; align-items: center; height: 54px; flex: none; padding: 0 48px 0 3px; border-top: 2px solid #b4b4b4; background: linear-gradient(#e8e8e8, #b2b2b2); font-variant-numeric: tabular-nums; }
.msg { flex: 1; }
.nav { display: flex; align-items: center; gap: 10px; margin-right: 77px; }
.nav svg { width: 18px; height: 18px; }
```
